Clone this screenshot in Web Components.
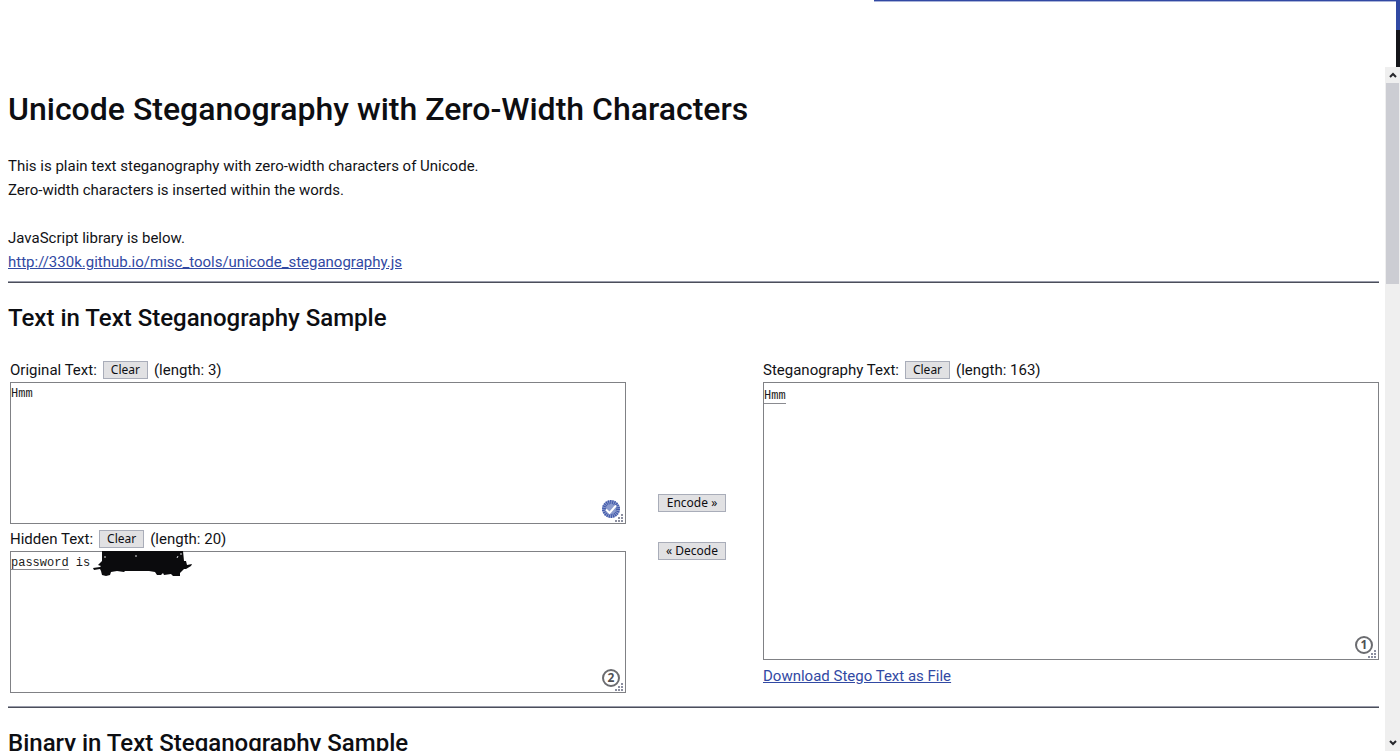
<!DOCTYPE html>
<html lang="en">
<head>
<meta charset="utf-8">
<title>Unicode Steganography with Zero-Width Characters</title>
<style>
  html, body { margin: 0; height: 100%; }
  body { background: #fff; color: #111216; font: 15px/24px Roboto, "Liberation Sans", sans-serif; overflow: hidden; }
</style>
</head>
<body>
<page-shell>
  <section-title level="1">Unicode Steganography with Zero-Width Characters</section-title>
  <intro-text href="http://330k.github.io/misc_tools/unicode_steganography.js"></intro-text>
  <rule-line></rule-line>
  <section-title level="2">Text in Text Steganography Sample</section-title>
  <steg-form></steg-form>
  <rule-line></rule-line>
  <section-title level="2">Binary in Text Steganography Sample</section-title>
</page-shell>

<script>
const define = (name, html, setup) => {
  const template = document.createElement('template');
  template.innerHTML = html;
  customElements.define(name, class extends HTMLElement {
    connectedCallback() {
      if (this.shadowRoot) return;
      const root = this.attachShadow({ mode: 'open' });
      root.append(template.content.cloneNode(true));
      if (setup) setup(this, root);
    }
  });
};

define('window-edge', `
  <style>
    :host { display: flex; justify-content: flex-end; height: 67px; }
    .line { width: 522px; height: 2px; box-sizing: border-box; background: #3149a3; border-bottom: 1px solid #a9b3d9; }
    .side { display: flex; flex-direction: column; width: 4px; }
    .blue { height: 30px; background: #3149a3; }
    .dark { flex: 1; background: #141519; }
  </style>
  <div class="line"></div>
  <div class="side"><div class="blue"></div><div class="dark"></div></div>`);

define('scroll-track', `
  <style>
    :host { display: flex; flex-direction: column; justify-content: space-between; width: 15px; background: #efefef; }
    .top { display: flex; flex-direction: column; height: 217px; }
    .cap { display: flex; align-items: center; justify-content: center; height: 16px; }
    .thumb { flex: 1; margin: 0 1px; background: #cccdd3; }
    svg { display: block; fill: none; stroke: #25262b; stroke-width: 2; }
  </style>
  <div class="top">
    <div class="cap"><svg width="8" height="6" viewBox="0 0 8 6"><path d="M1 5 4 2l3 3"/></svg></div>
    <div class="thumb"></div>
  </div>
  <div class="cap"><svg width="8" height="6" viewBox="0 0 8 6"><path d="M1 1l3 3 3-3"/></svg></div>`);

define('page-shell', `
  <style>
    :host { display: flex; flex-direction: column; height: 100vh; }
    .body { display: flex; flex: 1; min-height: 0; }
    main { flex: 1; min-width: 0; overflow: hidden; padding: 0 6px 0 8px; box-sizing: border-box; }
  </style>
  <window-edge></window-edge>
  <div class="body">
    <main><slot></slot></main>
    <scroll-track></scroll-track>
  </div>`);

define('section-title', `
  <style>
    :host { display: block; }
    h1, h2 { margin: 0; font-weight: 500; color: #0d0e12; }
    h1 { font-size: 32px; line-height: 48px; padding: 18px 0 21px; }
    h2 { font-size: 24px; line-height: 36px; padding: 17px 0 22px; }
  </style>`, (host, root) => {
  const h = document.createElement('h' + host.getAttribute('level'));
  h.append(document.createElement('slot'));
  root.append(h);
});

define('intro-text', `
  <style>
    :host { display: block; }
    p { margin: 0 0 24px; }
    p:last-child { margin: 0; }
    a { color: #3149a3; }
  </style>
  <p>This is plain text steganography with zero-width characters of Unicode.<br>Zero-width characters is inserted within the words.</p>
  <p>JavaScript library is below.<br><a></a></p>`, (host, root) => {
  const a = root.querySelector('a');
  a.href = a.textContent = host.getAttribute('href');
});

define('rule-line', `
  <style>
    :host { display: block; padding: 7px 0 0; }
    hr { margin: 0; border: 0; border-top: 1px solid #9a9dab; border-bottom: 1px solid #4b4e5a; }
  </style>
  <hr>`);

define('push-button', `
  <style>
    :host { display: flex; }
    button { width: 100%; height: 18px; margin: 0; padding: 0 7px; border: 1px solid #a9adb9; border-radius: 0; background: #e1e1e3; color: #0d0e12; font: 12px/16px "Noto Sans", sans-serif; white-space: nowrap; }
  </style>
  <button type="button"><slot></slot></button>`);

define('check-badge', `
  <style>
    :host { display: block; width: 18px; height: 18px; }
    svg { display: block; }
  </style>
  <svg width="18" height="18" viewBox="1 1 18 18">
    <circle cx="10" cy="10" r="9" fill="#8b9bcd"/>
    <circle cx="10" cy="10" r="7" fill="none" stroke="#3f57a8" stroke-width="4" stroke-dasharray="1 1"/>
    <path d="M5 10.500l3.500 3.500L15 6.500" fill="none" stroke="#fff" stroke-width="2"/>
  </svg>`);

define('count-badge', `
  <style>
    :host { display: flex; align-items: center; justify-content: center; width: 18px; height: 18px; box-sizing: border-box; border: 2px solid #6b6c70; border-radius: 50%; background: #fff; color: #4f5054; font: bold 12px/14px "Noto Sans", sans-serif; }
  </style>
  <slot></slot>`);

define('ink-scribble', `
  <style>
    :host { display: block; }
    svg { display: block; }
  </style>
  <svg width="100" height="28" viewBox="0 0 100 28">
    <path fill="#0b0b0d" d="M9 0H90L91 10 93 10 94 14 99 13 98 15 93 18 91 18 89 20 87 22 87 25 80 25 78 23 71 24 70 22 68 24 64 24 62 21 56 20H32L31 21 24 20 18 21 17 24 13 25 9 24 8 20 7 18 1 19 0 17 7 16 8 15 5 14 9 10z"/>
    <path stroke="#ddd" fill="none" d="M42 5h2M84 7l1-2M88 2v2M12 5v2"/>
  </svg>`);

define('text-panel', `
  <style>
    :host { display: flex; flex-direction: column; }
    .head { display: flex; align-items: center; gap: 6px; height: 24px; white-space: pre; }
    .box { position: relative; display: flex; flex: 1; }
    textarea { flex: 1; min-width: 0; margin: 0; padding: var(--pad, 2px) 0 0 0; border: 1px solid #808185; border-radius: 0; outline: 0; resize: none; background: #fff; color: #1b1c20; font: 12px/18px "Liberation Mono", monospace; overflow: hidden; }
    .mark { position: absolute; left: 1px; top: var(--mark, 18px); height: 0; border-top: 1px solid #8a8b90; font: 12px/18px "Liberation Mono", monospace; }
    .mark[hidden] { display: none; }
    .badge { position: absolute; right: 6px; bottom: 6px; }
    .grip { position: absolute; right: 3px; bottom: 2px; fill: #8c8fa0; }
    ::slotted([slot=ink]) { position: absolute; left: 83px; top: 0; }
  </style>
  <div class="head"><label for="t"></label><push-button>Clear</push-button><span class="count"></span></div>
  <div class="box">
    <textarea id="t" spellcheck="false"></textarea>
    <span class="mark"></span>
    <slot name="ink"></slot>
    <div class="badge"><slot name="badge"></slot></div>
    <svg class="grip" width="8" height="8" viewBox="0 0 8 8"><path d="M6 0h2v2H6zM3 3h2v2H3zM6 3h2v2H6zM0 6h2v2H0zM3 6h2v2H3zM6 6h2v2H6z"/></svg>
  </div>`, (host, root) => {
  root.querySelector('label').textContent = host.getAttribute('label') + ':';
  root.querySelector('.count').textContent = '(length: ' + host.getAttribute('length') + ')';
  root.querySelector('textarea').textContent = host.getAttribute('text');
  const mark = root.querySelector('.mark');
  mark.style.width = (host.getAttribute('marked') || 0) + 'ch';
  mark.hidden = !host.hasAttribute('marked');
});

define('steg-form', `
  <style>
    :host { display: grid; grid-template-columns: 1fr 137px 1fr; padding-left: 2px; }
    .inputs { display: flex; flex-direction: column; gap: 3px; padding-bottom: 6px; }
    .inputs text-panel { height: 166px; }
    .actions { display: flex; flex-direction: column; align-items: center; justify-content: center; gap: 30px; padding: 0 5px 3px 0; }
    .actions push-button { width: 68px; }
    .output text-panel { height: 302px; --pad: 4px; --mark: 21px; }
    .output p { margin: 4px 0 0; }
    a { color: #3149a3; }
  </style>
  <div class="inputs">
    <text-panel label="Original Text" length="3" text="Hmm"><check-badge slot="badge"></check-badge></text-panel>
    <text-panel label="Hidden Text" length="20" text="password is" marked="8"><ink-scribble slot="ink"></ink-scribble><count-badge slot="badge">2</count-badge></text-panel>
  </div>
  <div class="actions"><push-button>Encode »</push-button><push-button>« Decode</push-button></div>
  <div class="output">
    <text-panel label="Steganography Text" length="163" text="Hmm" marked="3"><count-badge slot="badge">1</count-badge></text-panel>
    <p><a href="#download">Download Stego Text as File</a></p>
  </div>`);
</script>
</body>
</html>
